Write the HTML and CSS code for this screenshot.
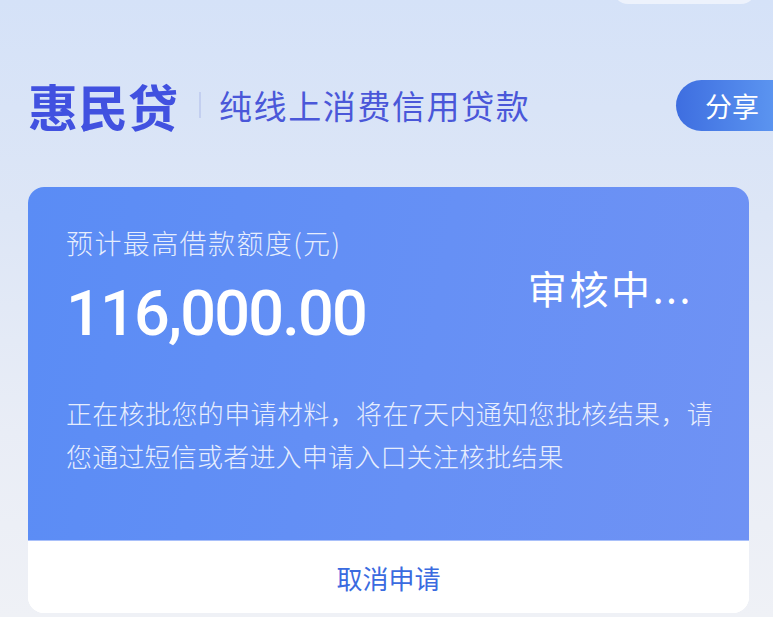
FILE: index.html
```html
<!DOCTYPE html>
<html lang="zh-CN">
<head>
<meta charset="utf-8">
<title>惠民贷</title>
<link rel="stylesheet" href="styles.css">
</head>
<body>
<div class="page">
  <div class="topbar"><div class="top-pill"></div></div>
  <header class="header">
    <h1 class="brand">惠民贷</h1>
    <span class="divider"></span>
    <span class="slogan">纯线上消费信用贷款</span>
    <a class="share">分享</a>
  </header>
  <section class="card">
    <div class="card-main">
      <div class="amount-row">
        <div class="amount-block">
          <div class="label">预计最高借款额度(元)</div>
          <div class="amount">116,000.00</div>
        </div>
        <div class="status">审核中...</div>
      </div>
      <p class="desc">正在核批您的申请材料，将在7天内通知您批核结果，请您通过短信或者进入申请入口关注核批结果</p>
    </div>
    <div class="card-foot">取消申请</div>
  </section>
</div>
</body>
</html>
```

FILE: styles.css
```css
* { box-sizing: border-box; }
html, body { margin: 0; padding: 0; }
body {
  width: 773px;
  height: 617px;
  overflow: hidden;
  font-family: "Noto Sans CJK SC", "Noto Sans", sans-serif;
  background: linear-gradient(180deg, #d5e2f8 0%, #dde6f6 35%, #e9edf6 70%, #eff1f6 100%);
}
.page { display: flex; flex-direction: column; }
.topbar { display: flex; justify-content: flex-end; padding-right: 17px; }
.top-pill {
  width: 143px;
  height: 30px;
  margin-top: -26px;
  border-radius: 16px;
  background: #edf2fc;
}
.header {
  display: flex;
  align-items: center;
  height: 52px;
  margin-top: 75px;
  padding-left: 28px;
}
.brand {
  margin: 0;
  font-size: 50px;
  font-weight: 700;
  line-height: 52px;
  color: #4151e0;
}
.divider {
  width: 2px;
  height: 26px;
  margin: 0 18px 0 21px;
  background: #c3cff0;
}
.slogan {
  font-size: 33px;
  font-weight: 400;
  line-height: 40px;
  color: #4a57d9;
  letter-spacing: 1.6px;
}
.share {
  margin-left: auto;
  height: 51px;
  width: 97px;
  padding-left: 29px;
  display: flex;
  align-items: center;
  border-radius: 26px 0 0 26px;
  background: linear-gradient(90deg, #3e6ee0 0%, #5b94f0 100%);
  color: #fff;
  font-size: 27px;
  font-weight: 400;
}
.card {
  margin: 56px 24px 0 28px;
  border-radius: 16px;
  overflow: hidden;
  background: #fff;
}
.card-main {
  height: 354px;
  padding: 39px 36px 0 38px;
  background: linear-gradient(100deg, #5a8cf5 0%, #6690f5 55%, #6f92f4 100%);
  border-bottom: 1px solid #a9c0fa;
}
.amount-row { display: flex; align-items: flex-start; }
.amount-block { display: flex; flex-direction: column; }
.label {
  font-size: 27px;
  font-weight: 300;
  line-height: 34px;
  letter-spacing: 1.4px;
  color: rgba(255, 255, 255, 0.85);
}
.amount {
  margin-top: 18px;
  font-family: Roboto, "Liberation Sans", sans-serif;
  font-weight: 500;
  font-size: 63px;
  line-height: 72px;
  letter-spacing: -1.8px;
  color: #fff;
}
.status {
  margin-left: auto;
  margin-right: 20px;
  margin-top: 37px;
  font-size: 39px;
  line-height: 48px;
  color: #fff;
  letter-spacing: 2.6px;
}
.desc {
  margin: 41px 0 0;
  font-size: 26px;
  font-weight: 300;
  line-height: 43px;
  letter-spacing: 0.2px;
  text-align: justify;
  color: rgba(255, 255, 255, 0.86);
}
.card-foot {
  height: 72px;
  display: flex;
  align-items: center;
  justify-content: center;
  font-size: 26px;
  color: #3a6be0;
  background: #fff;
}
```
